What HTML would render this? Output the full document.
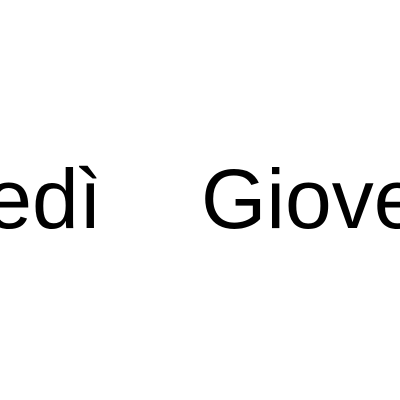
<!DOCTYPE html>
<html><head><style>
html,body{margin:0;padding:0;width:400px;height:400px;background:#fff;overflow:hidden;position:relative}
.t{position:absolute;font-family:"Liberation Sans",Arial,sans-serif;font-size:84px;line-height:1;color:#000;white-space:nowrap;top:157px}
</style></head><body>
<div class="t" style="right:298px">Mercoledì</div>
<div class="t" style="left:201px">Giovedì</div>
</body></html>
